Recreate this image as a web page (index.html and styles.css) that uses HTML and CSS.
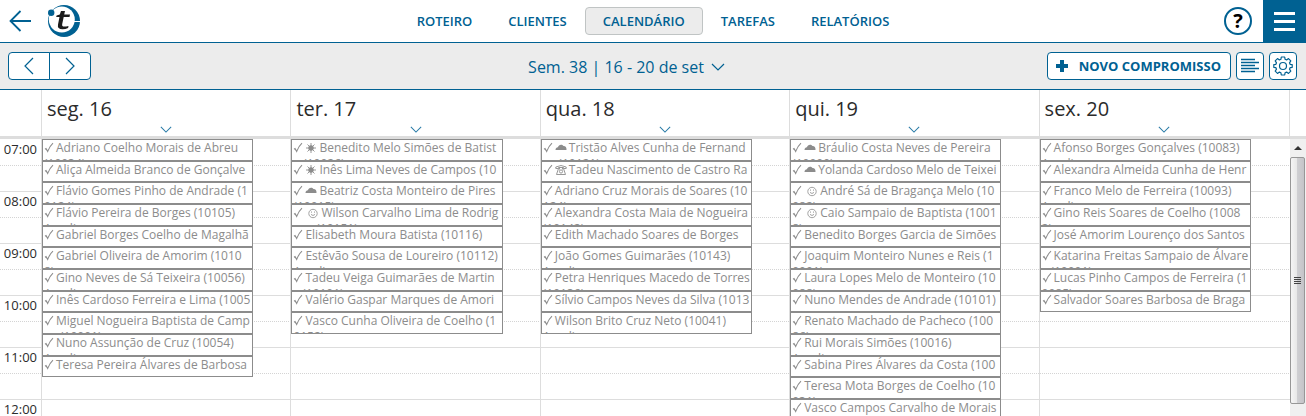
FILE: index.html
```html
<!DOCTYPE html>
<html lang="pt">
<head>
<meta charset="utf-8">
<title>Calendário</title>
<link rel="stylesheet" href="styles.css">
</head>
<body>
<svg class="sprite" aria-hidden="true">
  <symbol id="check" viewBox="0 0 10 12"><path d="M1 7.2 2 6.600 3.700 9.400C5 6 6.600 3.400 9 1.200" fill="none" stroke="currentColor" stroke-width="1.100"/></symbol>
  <symbol id="sun" viewBox="0 0 12 12"><circle cx="6" cy="6" r="2.700" fill="currentColor"/><path d="M6 1v10M1 6h10M2.500 2.500l7 7M9.500 2.500l-7 7" stroke="currentColor" stroke-width=".9"/></symbol>
  <symbol id="cloud" viewBox="0 0 12 12"><path d="M.5 8C.5 6 2 5 3 5.200 3.400 2.600 7 1.800 8.500 4 10.500 3.900 11.700 5.500 11.500 8z" fill="currentColor"/></symbol>
  <symbol id="smile" viewBox="0 0 12 12"><circle cx="6" cy="6.500" r="4.200" fill="none" stroke="currentColor" stroke-width=".8"/><path d="M4 7.400q2 2.200 4 0M4.500 4.500v1.200M7.500 4.500v1.200" fill="none" stroke="currentColor" stroke-width=".8"/></symbol>
  <symbol id="phone" viewBox="0 0 12 12"><path d="M.8 4.500V3q5.200-3 10.400 0v1.500H8.500V3.500h-5v1zM3.500 4.500 1.500 10.500h9L8.500 4.500M4.500 3.500v2M7.500 3.500v2" fill="none" stroke="currentColor" stroke-width=".9"/><circle cx="6" cy="7.500" r="1.600" fill="none" stroke="currentColor" stroke-width=".9"/></symbol>
  <symbol id="down" viewBox="0 0 14 8"><path d="M1 1l6 6 6-6" fill="none" stroke="currentColor" stroke-width="1.200"/></symbol>
</svg>

<header class="topbar">
  <div class="brand">
    <button class="plain" aria-label="Voltar"><svg width="22" height="22" viewBox="0 0 22 22"><path d="M11.500 1 1.500 11l10 10M1.500 11H22" fill="none" stroke="currentColor" stroke-width="1.800"/></svg></button>
    <a class="logo" href="#" aria-label="Início"><svg width="34" height="34" viewBox="0 0 34 34">
      <circle cx="17" cy="17" r="16" fill="#006192"/>
      <circle cx="14.800" cy="15.500" r="13" fill="#fff"/>
      <path d="M27 17.500h7" stroke="#fff" stroke-width="1"/>
      <circle cx="4.200" cy="8.700" r="3.200" fill="#006192"/>
      <path d="M14 7h4l-.8 3.600H23l-.5 2.400h-5.800l-1.500 7q-.5 2.600 2 2.600 2 0 4.300-.5l-.4 1.900q-2.500 1.200-5.600 1.200-5.400 0-4.500-4.800L12.500 13H9.200l.4-1.600 3.200-.8z" fill="#1c1c1c"/>
    </svg></a>
  </div>
  <nav class="nav">
    <a href="#">ROTEIRO</a><a href="#">CLIENTES</a><a href="#" class="on" aria-current="page">CALENDÁRIO</a><a href="#">TAREFAS</a><a href="#">RELATÓRIOS</a>
  </nav>
  <div class="tools">
    <button class="help" aria-label="Ajuda">?</button>
    <button class="menu" aria-label="Menu"><i></i><i></i><i></i></button>
  </div>
</header>

<div class="toolbar">
  <div class="pager">
    <button aria-label="Anterior"><svg width="10" height="18" viewBox="0 0 10 18"><path d="M9 1 1 9l8 8" fill="none" stroke="currentColor" stroke-width="1.200"/></svg></button>
    <button aria-label="Seguinte"><svg width="10" height="18" viewBox="0 0 10 18"><path d="M1 1l8 8-8 8" fill="none" stroke="currentColor" stroke-width="1.200"/></svg></button>
  </div>
  <button class="period">Sem. 38 | 16 - 20 de set <svg><use href="#down"/></svg></button>
  <div class="actions">
    <button class="new"><svg width="12" height="12" viewBox="0 0 12 12"><path d="M6 0v12M0 6h12" stroke="currentColor" stroke-width="4"/></svg>NOVO COMPROMISSO</button>
    <button class="square" aria-label="Lista"><svg width="20" height="16" viewBox="0 0 20 16"><path d="M1 1.500h14M1 4.500h18M1 7.500h14M1 10.500h18M1 13.500h14" stroke="currentColor" stroke-width="1.300"/></svg></button>
    <button class="square" aria-label="Definições"><svg width="20" height="20" viewBox="0 0 20 20" fill="none" stroke="currentColor" stroke-width="1.200" stroke-linejoin="round"><circle cx="10" cy="10" r="3.500"/><path d="M8.300 1h3.400l.4 2.300 1.500.6 1.900-1.300 2.300 2.300-1.300 1.900.6 1.500 2.100.4v2.600l-2.100.4-.6 1.500 1.300 1.900-2.300 2.300-1.900-1.300-1.500.6-.4 2.300H8.300l-.4-2.300-1.500-.6-1.900 1.300-2.300-2.300 1.300-1.900-.6-1.500L.8 11.300V8.700l2.100-.4.600-1.500-1.300-1.900 2.300-2.300 1.900 1.300 1.500-.6z"/></svg></button>
  </div>
</div>

<div class="week heads">
  <div></div>
  <div class="head"><h2>seg. 16</h2><svg><use href="#down"/></svg></div>
  <div class="head"><h2>ter. 17</h2><svg><use href="#down"/></svg></div>
  <div class="head"><h2>qua. 18</h2><svg><use href="#down"/></svg></div>
  <div class="head"><h2>qui. 19</h2><svg><use href="#down"/></svg></div>
  <div class="head"><h2>sex. 20</h2><svg><use href="#down"/></svg></div>
  <div class="gutter"><div class="edge"></div></div>
</div>

<main class="week grid">
  <div class="times"><time>07:00</time><time>08:00</time><time>09:00</time><time>10:00</time><time>11:00</time><time>12:00</time></div>
  <div class="day">
    <div class="event"><svg><use href="#check"/></svg>Adriano Coelho Morais de Abreu<br>(10034)</div>
    <div class="event"><svg><use href="#check"/></svg>Aliça Almeida Branco de Gonçalve<br>s</div>
    <div class="event"><svg><use href="#check"/></svg>Flávio Gomes Pinho de Andrade (1<br>0124)</div>
    <div class="event"><svg><use href="#check"/></svg>Flávio Pereira de Borges (10105)<br>Anadia</div>
    <div class="event"><svg><use href="#check"/></svg>Gabriel Borges Coelho de Magalhã<br>es</div>
    <div class="event"><svg><use href="#check"/></svg>Gabriel Oliveira de Amorim (1010<br>8)</div>
    <div class="event"><svg><use href="#check"/></svg>Gino Neves de Sá Teixeira (10056)<br>Anadia</div>
    <div class="event"><svg><use href="#check"/></svg>Inês Cardoso Ferreira e Lima (1005<br>2)</div>
    <div class="event"><svg><use href="#check"/></svg>Miguel Nogueira Baptista de Camp<br>os (10001)</div>
    <div class="event"><svg><use href="#check"/></svg>Nuno Assunção de Cruz (10054)<br>Anadia</div>
    <div class="event"><svg><use href="#check"/></svg>Teresa Pereira Álvares de Barbosa</div>
  </div>
  <div class="day">
    <div class="event"><svg><use href="#check"/></svg><svg class="mark"><use href="#sun"/></svg>Benedito Melo Simões de Batist<br>a (10026)</div>
    <div class="event"><svg><use href="#check"/></svg><svg class="mark"><use href="#sun"/></svg>Inês Lima Neves de Campos (10<br>022)</div>
    <div class="event"><svg><use href="#check"/></svg><svg class="mark"><use href="#cloud"/></svg>Beatriz Costa Monteiro de Pires<br>(10015)</div>
    <div class="event"><svg><use href="#check"/></svg><svg class="mark wide"><use href="#smile"/></svg>Wilson Carvalho Lima de Rodrig<br>ues (10151)</div>
    <div class="event"><svg><use href="#check"/></svg>Elisabeth Moura Batista (10116)<br>Lousã</div>
    <div class="event"><svg><use href="#check"/></svg>Estêvão Sousa de Loureiro (10112)<br>Anadia</div>
    <div class="event"><svg><use href="#check"/></svg>Tadeu Veiga Guimarães de Martin<br>s (10101)</div>
    <div class="event"><svg><use href="#check"/></svg>Valério Gaspar Marques de Amori<br>m</div>
    <div class="event"><svg><use href="#check"/></svg>Vasco Cunha Oliveira de Coelho (1<br>0152)</div>
  </div>
  <div class="day">
    <div class="event"><svg><use href="#check"/></svg><svg class="mark"><use href="#cloud"/></svg>Tristão Alves Cunha de Fernand<br>es (10121)</div>
    <div class="event"><svg><use href="#check"/></svg><svg class="mark"><use href="#phone"/></svg>Tadeu Nascimento de Castro Ra<br>mos</div>
    <div class="event"><svg><use href="#check"/></svg>Adriano Cruz Morais de Soares (10<br>124)</div>
    <div class="event"><svg><use href="#check"/></svg>Alexandra Costa Maia de Nogueira<br>(10142)</div>
    <div class="event"><svg><use href="#check"/></svg>Edith Machado Soares de Borges</div>
    <div class="event"><svg><use href="#check"/></svg>João Gomes Guimarães (10143)<br>Anadia</div>
    <div class="event"><svg><use href="#check"/></svg>Petra Henriques Macedo de Torres<br>(10136)</div>
    <div class="event"><svg><use href="#check"/></svg>Sílvio Campos Neves da Silva (1013<br>2)</div>
    <div class="event"><svg><use href="#check"/></svg>Wilson Brito Cruz Neto (10041)<br>Anadia</div>
  </div>
  <div class="day">
    <div class="event"><svg><use href="#check"/></svg><svg class="mark"><use href="#cloud"/></svg>Bráulio Costa Neves de Pereira<br>(10090)</div>
    <div class="event"><svg><use href="#check"/></svg><svg class="mark"><use href="#cloud"/></svg>Yolanda Cardoso Melo de Teixei<br>ra</div>
    <div class="event"><svg><use href="#check"/></svg><svg class="mark wide"><use href="#smile"/></svg>André Sá de Bragança Melo (10<br>082)</div>
    <div class="event"><svg><use href="#check"/></svg><svg class="mark wide"><use href="#smile"/></svg>Caio Sampaio de Baptista (1001<br>8)</div>
    <div class="event"><svg><use href="#check"/></svg>Benedito Borges Garcia de Simões</div>
    <div class="event"><svg><use href="#check"/></svg>Joaquim Monteiro Nunes e Reis (1<br>0091)</div>
    <div class="event"><svg><use href="#check"/></svg>Laura Lopes Melo de Monteiro (10<br>088)</div>
    <div class="event"><svg><use href="#check"/></svg>Nuno Mendes de Andrade (10101)<br>Lousã</div>
    <div class="event"><svg><use href="#check"/></svg>Renato Machado de Pacheco (100<br>86)</div>
    <div class="event"><svg><use href="#check"/></svg>Rui Morais Simões (10016)<br>Anadia</div>
    <div class="event"><svg><use href="#check"/></svg>Sabina Pires Álvares da Costa (100<br>12)</div>
    <div class="event"><svg><use href="#check"/></svg>Teresa Mota Borges de Coelho (10<br>031)</div>
    <div class="event"><svg><use href="#check"/></svg>Vasco Campos Carvalho de Morais</div>
  </div>
  <div class="day">
    <div class="event"><svg><use href="#check"/></svg>Afonso Borges Gonçalves (10083)<br>Anadia</div>
    <div class="event"><svg><use href="#check"/></svg>Alexandra Almeida Cunha de Henr<br>iques</div>
    <div class="event"><svg><use href="#check"/></svg>Franco Melo de Ferreira (10093)<br>Anadia</div>
    <div class="event"><svg><use href="#check"/></svg>Gino Reis Soares de Coelho (1008<br>2)</div>
    <div class="event"><svg><use href="#check"/></svg>José Amorim Lourenço dos Santos</div>
    <div class="event"><svg><use href="#check"/></svg>Katarina Freitas Sampaio de Álvare<br>s (10001)</div>
    <div class="event"><svg><use href="#check"/></svg>Lucas Pinho Campos de Ferreira (1<br>0085)</div>
    <div class="event"><svg><use href="#check"/></svg>Salvador Soares Barbosa de Braga</div>
  </div>
  <div class="gutter"><div class="scroll"><span class="up"></span><div class="thumb"><i></i><i></i><i></i><i></i></div></div></div>
</main>
</body>
</html>
```
FILE: styles.css
```css
* { box-sizing: border-box; }
body {
  margin: 0;
  height: 100vh;
  overflow: hidden;
  display: flex;
  flex-direction: column;
  background: #fff;
  color: #006192;
  font-family: "Open Sans", "Noto Sans", sans-serif;
  font-size: 13px;
}
button { font: inherit; color: inherit; background: none; border: 0; padding: 0; cursor: pointer; }
a { color: inherit; text-decoration: none; }
svg { display: block; flex: none; }
.sprite { position: absolute; width: 0; height: 0; }

.topbar, .toolbar {
  flex: none;
  display: grid;
  grid-template-columns: 1fr auto 1fr;
  align-items: center;
  border-bottom: 1px solid #006192;
}
.topbar { height: 43px; }
.brand { display: flex; align-items: center; gap: 16px; padding-left: 9px; }
.nav { display: flex; font-weight: 600; }
.nav a { padding: 0 17px; line-height: 26px; border: 1px solid transparent; border-radius: 4px; }
.nav .on { background: #ececec; border-color: #c0c4c4; }
.tools { display: flex; justify-content: flex-end; align-items: center; gap: 11px; }
.help {
  width: 28px;
  height: 28px;
  border: 2px solid #006192;
  border-radius: 50%;
  color: #000;
  font-size: 20px;
  font-weight: 700;
  line-height: 24px;
}
.menu { width: 43px; height: 42px; padding: 0 11px; background: #006192; display: grid; align-content: center; gap: 5px; }
.menu i { height: 3px; background: #fff; }

.toolbar { height: 47px; padding: 0 9px 0 8px; background: #ececec; }
.pager { display: flex; }
.pager button { width: 42px; height: 28px; display: grid; place-items: center; background: #fff; border: 1px solid #006192; }
.pager button:first-child { border-radius: 4px 0 0 4px; }
.pager button:last-child { border-radius: 0 4px 4px 0; margin-left: -1px; }
.period { display: flex; align-items: center; gap: 7px; padding: 2px 52px 0 0; font-size: 16px; }
.period svg { width: 14px; height: 8px; }
.actions { display: flex; justify-content: flex-end; gap: 5px; }
.new, .square { height: 28px; display: flex; align-items: center; justify-content: center; background: #fff; border: 1px solid #006192; border-radius: 4px; }
.new { gap: 11px; padding: 0 9px 0 8px; font-weight: 700; }
.square { width: 28px; }

.week { display: grid; grid-template-columns: 41px repeat(5, minmax(0, 1fr)) 18px; }
.heads { flex: none; height: 49px; border-bottom: 3px solid #ddd; color: #2b2b2b; }
.head { display: flex; flex-direction: column; justify-content: space-between; padding: 5px 5px 3px; border-left: 1px solid #ddd; }
.head h2 { margin: 0; font-size: 20px; font-weight: 400; line-height: 28px; }
.head svg { width: 12px; height: 7px; align-self: center; color: #2a7ca8; }
.gutter { padding-left: 1px; }
.edge { height: 100%; border-left: 1px solid #ddd; }

/* Hour lines every 52px, dotted half-hour lines between them. */
.grid {
  flex: 1;
  min-height: 0;
  overflow: hidden;
  background:
    linear-gradient(#fff 0 0) 0 0 / 100% 1px no-repeat,
    repeating-linear-gradient(#ddd 0 1px, transparent 1px 52px),
    repeating-linear-gradient(90deg, transparent 0 1px, #fff 1px 2px),
    repeating-linear-gradient(transparent 0 26px, #d4d4d4 26px 27px, transparent 27px 52px);
}
.times { display: flex; flex-direction: column; color: #2b2b2b; text-align: right; }
.times time { flex: none; height: 52px; padding-right: 4px; line-height: 20px; }
.day { min-height: 0; border-left: 1px solid #ddd; }
.event {
  width: 85%;
  height: 22px;
  padding: 0 1px;
  overflow: hidden;
  white-space: nowrap;
  background: #fff;
  border: 1px solid #8c8c8c;
  color: #8c8c8c;
  font-size: 12px;
  line-height: 16px;
}
.event:nth-child(3n+2) { height: 21px; }
.event svg { display: inline-block; width: 10px; height: 12px; margin-right: 2px; vertical-align: -2px; }
.event .mark { width: 12px; margin-right: 2px; }
.event .wide { margin: 0 2px; }

.scroll { height: 100%; display: flex; flex-direction: column; background: #f0f0f0; margin-left: 1px; }
.up { flex: none; height: 18px; display: grid; place-items: center; }
.up::before { content: ""; border: 4px solid transparent; border-top: 0; border-bottom-color: #333; }
.thumb {
  flex: none;
  height: 247px;
  margin-right: 1px;
  border: 1px solid #979797;
  border-radius: 2px;
  background: linear-gradient(90deg, #f5f5f5, #e8e8e8 45%, #cfcfd2 50%, #c4c4c8);
  display: grid;
  place-content: center;
  gap: 1px;
}
.thumb i { width: 7px; height: 1px; background: #444; }
```
